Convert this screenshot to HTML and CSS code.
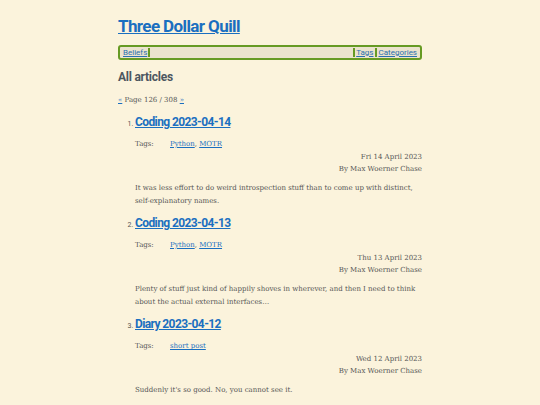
FILE: index.html
```html
<!DOCTYPE html>
<html>
<head>
<meta charset="utf-8">
<link rel="stylesheet" href="styles.css">
</head>
<body>
<div class="page">
  <h1 class="site-title"><a href="#">Three Dollar Quill</a></h1>
  <nav class="nav">
    <a class="nav-link" href="#">Beliefs</a>
    <span class="nav-fill"></span>
    <a class="nav-link sep" href="#">Tags</a>
    <a class="nav-link sep" href="#">Categories</a>
  </nav>
  <h2 class="section-title">All articles</h2>
  <p class="pager"><a href="#">«</a> Page 126 / 308 <a href="#">»</a></p>
  <ol class="articles">
    <li class="article">
      <h3 class="article-title"><a href="#">Coding 2023-04-14</a></h3>
      <div class="tags"><span class="tags-label">Tags:</span><span><a href="#">Python</a>, <a href="#">MOTR</a></span></div>
      <div class="meta"><div>Fri 14 April 2023</div><div>By Max Woerner Chase</div></div>
      <p class="summary">It was less effort to do weird introspection stuff than to come up with distinct, self-explanatory names.</p>
    </li>
    <li class="article">
      <h3 class="article-title"><a href="#">Coding 2023-04-13</a></h3>
      <div class="tags"><span class="tags-label">Tags:</span><span><a href="#">Python</a>, <a href="#">MOTR</a></span></div>
      <div class="meta"><div>Thu 13 April 2023</div><div>By Max Woerner Chase</div></div>
      <p class="summary">Plenty of stuff just kind of happily shoves in wherever, and then I need to think about the actual external interfaces…</p>
    </li>
    <li class="article">
      <h3 class="article-title"><a href="#">Diary 2023-04-12</a></h3>
      <div class="tags"><span class="tags-label">Tags:</span><span><a href="#">short post</a></span></div>
      <div class="meta"><div>Wed 12 April 2023</div><div>By Max Woerner Chase</div></div>
      <p class="summary">Suddenly it's so good. No, you cannot see it.</p>
    </li>
  </ol>
</div>
</body>
</html>
```
FILE: styles.css
```css
html, body {
  margin: 0;
  padding: 0;
  background: #fbf3dc;
}
body {
  font-family: "DejaVu Serif", serif;
  color: #555;
  font-size: 8px;
}
.page {
  width: 304px;
  margin: 0 auto;
  padding-top: 14px;
}
a { color: #1a6fc0; }
.site-title {
  font-family: Roboto, sans-serif;
  font-size: 17px;
  font-weight: 700;
  letter-spacing: -0.6px;
  margin: 0 0 7px;
  line-height: 24px;
}
.nav {
  display: flex;
  align-items: center;
  border: 2px solid #669a23;
  border-radius: 3px;
  background: #ebe3cd;
  height: 11px;
  font-family: Roboto, sans-serif;
  font-size: 8px;
  padding: 0 2px;
}
.nav-link {
  line-height: 11px;
  padding: 0 1px;
  color: #2a70b0;
}
.nav-fill {
  flex: 1;
  align-self: stretch;
  margin: 1px 0;
  border-left: 2px solid #669a23;
  border-right: 2px solid #669a23;
}
.nav-link.sep + .nav-link.sep {
  border-left: 2px solid #669a23;
  margin: 1px 0;
  line-height: 9px;
  padding-left: 2px;
}
.section-title {
  font-family: Roboto, sans-serif;
  font-size: 12px;
  font-weight: 700;
  letter-spacing: -0.25px;
  color: #4c5660;
  margin: 9px 0 0;
  line-height: 16px;
}
.pager {
  margin: 10px 0 0;
  font-size: 7px;
  line-height: 10px;
  color: #555;
}
.articles {
  margin: 8px 0 0;
  padding-left: 17px;
  font-size: 7px;
  font-family: Roboto, sans-serif;
}
.article { margin: 0; }
.article-title {
  font-family: Roboto, sans-serif;
  font-size: 12px;
  font-weight: 700;
  letter-spacing: -0.6px;
  margin: 0;
  line-height: 18px;
}
.tags {
  display: flex;
  margin-top: 8px;
  font-size: 7px;
  line-height: 11px;
  font-family: "DejaVu Serif", serif;
}
.tags-label { width: 35px; }
.meta {
  text-align: right;
  font-size: 7px;
  line-height: 12px;
  margin-top: 1px;
  font-family: "DejaVu Serif", serif;
}
.summary {
  margin: 7px 0 6px;
  font-size: 7px;
  line-height: 13px;
  font-family: "DejaVu Serif", serif;
}
```
